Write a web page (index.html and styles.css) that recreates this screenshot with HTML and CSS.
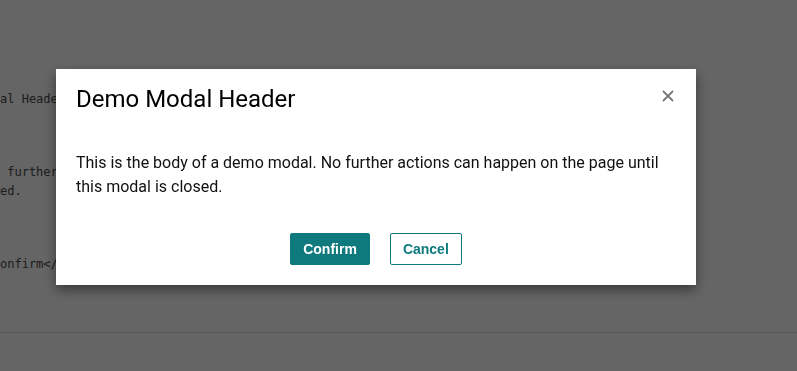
FILE: index.html
```html
<!DOCTYPE html>
<html lang="en">
<head>
<meta charset="utf-8">
<title>Demo Modal</title>
<link rel="stylesheet" href="styles.css">
</head>
<body>
<div class="page">
  <pre class="code">

al Heade



 further
ed.



onfirm&lt;/</pre>
  <div class="rule"></div>
</div>
<div class="backdrop">
  <div class="modal" role="dialog" aria-labelledby="mh">
    <div class="modal-header">
      <h2 id="mh" class="modal-title">Demo Modal Header</h2>
      <button class="close" aria-label="Close">
        <svg width="12" height="12" viewBox="0 0 12 12"><path d="M1 1L11 11M11 1L1 11" stroke="#767676" stroke-width="1.8" fill="none"/></svg>
      </button>
    </div>
    <div class="modal-body">
      <p>This is the body of a demo modal. No further actions can happen on the page until this modal is closed.</p>
    </div>
    <div class="modal-footer">
      <button class="btn btn-primary">Confirm</button>
      <button class="btn btn-outline">Cancel</button>
    </div>
  </div>
</div>
</body>
</html>
```
FILE: styles.css
```css
html, body {
  margin: 0;
  padding: 0;
  background: #ffffff;
  width: 797px;
  height: 371px;
  overflow: hidden;
}
.page {
  position: relative;
  height: 371px;
}
.code {
  margin: 0;
  padding-top: 72px;
  font-family: "DejaVu Sans Mono", monospace;
  font-size: 12px;
  line-height: 18.3px;
  color: #4a4a4a;
}
.rule {
  position: absolute;
  left: 0;
  right: 0;
  top: 332px;
  border-top: 1px solid #dcdcdc;
}
.backdrop {
  position: fixed;
  inset: 0;
  background: rgba(0, 0, 0, 0.605);
  display: flex;
  justify-content: flex-start;
  align-items: flex-start;
  padding: 69px 0 0 56px;
}
.modal {
  width: 640px;
  background: #fff;
  box-shadow: 0 5px 12px rgba(0, 0, 0, 0.45);
  font-family: Roboto, "Noto Sans", sans-serif;
  color: #111;
}
.modal-header {
  display: flex;
  justify-content: space-between;
  align-items: flex-start;
  padding: 16px 20px 16px;
}
.modal-title {
  margin: 0;
  font-size: 24px;
  font-weight: 400;
  line-height: 28px;
  color: #000;
}
.close {
  border: 0;
  background: none;
  padding: 0;
  margin: 5px 2px 0 0;
  width: 12px;
  height: 12px;
  display: flex;
}
.modal-body {
  padding: 22px 20px 22px;
}
.modal-body p {
  margin: 0;
  font-size: 16px;
  line-height: 24px;
  color: #111;
}
.modal-footer {
  display: flex;
  justify-content: center;
  gap: 20px;
  padding: 12px 20px 20px;
}
.btn {
  height: 32px;
  padding: 0 12px;
  border: 1px solid #0e7a7e;
  border-radius: 2px;
  font-family: "Liberation Sans", Arial, sans-serif;
  font-size: 14px;
  font-weight: 700;
}
.btn-primary {
  background: #0e7a7e;
  color: #fff;
}
.btn-outline {
  background: #fff;
  color: #0e7a7e;
}
```
